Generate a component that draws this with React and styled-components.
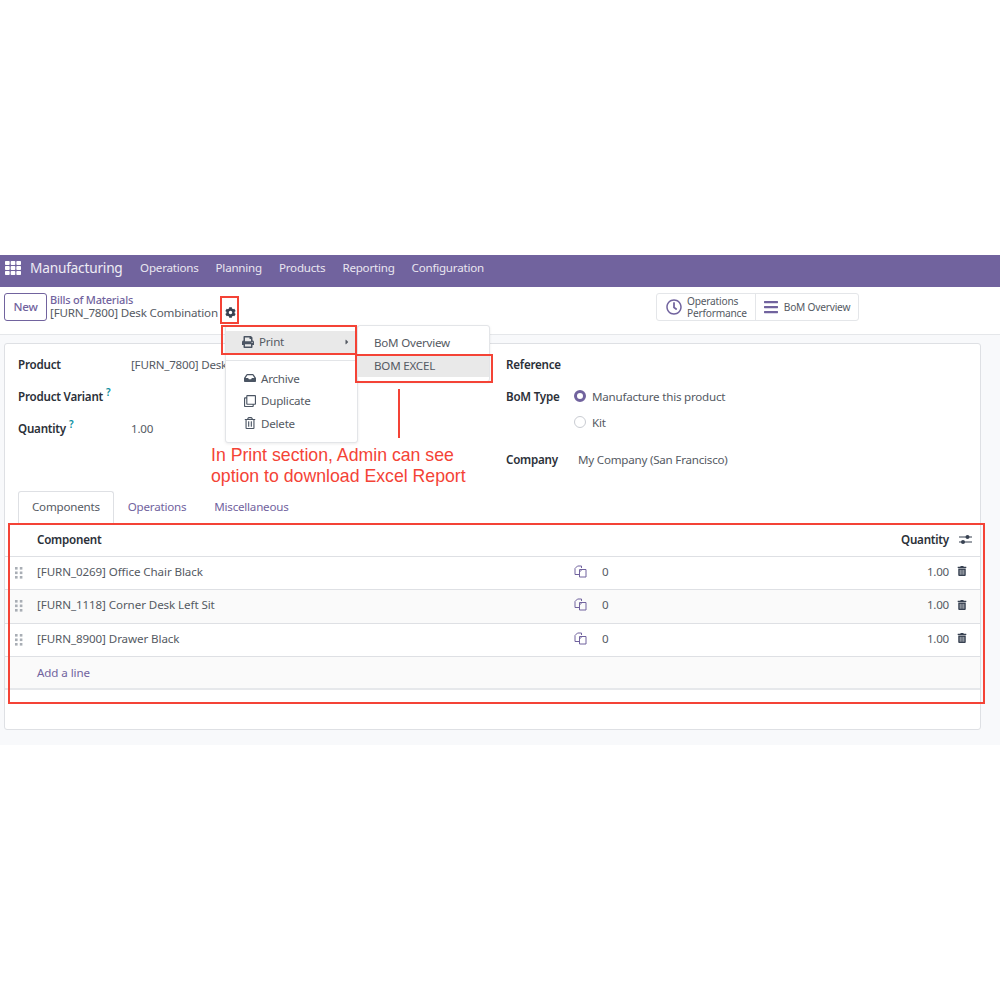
import React from "react";
import styled, { createGlobalStyle } from "styled-components";
import { FaCog, FaPrint, FaInbox, FaRegClone, FaRegTrashAlt, FaRegClock, FaBars, FaTrashAlt, FaCaretRight, FaTh } from "react-icons/fa";

const Global = createGlobalStyle`
  html, body { margin: 0; padding: 0; background: #fff; }
  body { font-family: "Noto Sans", "Open Sans", sans-serif; font-size: 11.6px; letter-spacing: -0.22px; color: #555a63; }
  * { box-sizing: border-box; }
`;
const Page = styled.div`position: relative; width: 1000px; height: 1000px; padding-top: 255px; overflow: hidden;`;
const Navbar = styled.nav`height: 32px; background: #71639e; color: #fff; display: flex; align-items: center; padding: 0 0 7px 5px;`;
const Apps = styled.span`display: flex; font-size: 16px; margin-right: 9px;`;
const Brand = styled.span`font-size: 13.7px; margin-right: 17.5px; color: #eeecf4;`;
const NavLink = styled.span`margin-right: 17px; color: #e9e6f0;`;
const ControlPanel = styled.div`height: 48px; display: flex; align-items: flex-start; padding: 6px 0 0 4px; background: #fff; border-bottom: 1px solid #e5e7ea;`;
const NewButton = styled.button`width: 43px; height: 28px; border: 1px solid #71639e; border-radius: 3px; background: #fff; color: #71639e; font: 500 11.6px "Noto Sans", sans-serif; letter-spacing: -0.22px; padding: 0 0 1px;`;
const Crumbs = styled.div`margin-left: 3px; width: 168px; display: flex; flex-direction: column; line-height: 13px; white-space: nowrap;`;
const CrumbLink = styled.span`color: #71639e; font-size: 11px; font-weight: 500;`;
const CrumbCurrent = styled.span`color: #555a63; letter-spacing: -0.18px;`;
const Gear = styled.span`display: flex; margin: 14px 0 0 7px; color: #374151; font-size: 11px;`;
const Stats = styled.div`display: flex; margin-left: 420px; height: 28px; border: 1px solid #e4e6e9; border-radius: 3px;`;
const Stat = styled.div`display: flex; align-items: center; gap: 5px; padding: 0 8px 0 ${p => p.$left}px; font-size: 10.2px; line-height: 12px; color: #555a63; & + & { border-left: 1px solid #e4e6e9; }`;
const StatIcon = styled.span`display: flex; color: #71639e; font-size: 16px;`;
const Content = styled.main`height: 410px; background: #f8f9fb; padding: 8px 19px 0 4px;`;
const Sheet = styled.section`height: 387px; background: #fff; border: 1px solid #dee0e4; border-radius: 3px; padding-top: 4px;`;
const FormGrid = styled.div`display: grid; grid-template-columns: 488px 1fr; padding-left: 13px; height: 143px;`;
const Col = styled.div`display: flex; flex-direction: column;`;
const Row = styled.div`height: ${p => p.$h || 32}px; display: flex; align-items: center;`;
const Label = styled.span`width: ${p => p.$w || 113}px; font-weight: 600; color: #2b3038; white-space: nowrap;`;
const Help = styled.sup`color: #0a8ea0; font-size: 10px; line-height: 0; margin-left: 3px; font-weight: 600;`;
const Value = styled.span`color: #555a63; white-space: nowrap;`;
const Radio = styled.span`width: 12px; height: 12px; border-radius: 50%; margin-right: 6px; background: #fff; border: ${p => p.$on ? "3.5px solid #71639e" : "1px solid #c9ccd2"};`;
const Tabs = styled.div`display: flex; height: 32px; margin-left: 13px; align-items: stretch;`;
const Tab = styled.div`display: flex; align-items: center; padding: 0 13px 2px; color: ${p => p.$on ? "#555a63" : "#71639e"}; background: #fff; border: 1px solid ${p => p.$on ? "#dee0e4" : "transparent"}; border-bottom: none; border-radius: 3px 3px 0 0;`;
const Table = styled.div`display: flex; flex-direction: column;`;
const TRow = styled.div`height: ${p => p.$h || 33.5}px; padding-bottom: ${p => p.$pb ?? 3}px; display: grid; grid-template-columns: 32px 537px 1fr 31px; align-items: center; background: ${p => p.$alt ? "#fafafa" : "#fff"}; border-bottom: ${p => p.$thick ? "2px solid #e6e8eb" : "1px solid #dee0e4"};`;
const Handle = styled.span`display: flex; padding: 3px 0 0 10px;`;
const Name = styled.span`white-space: nowrap; letter-spacing: ${p => p.$head ? "-0.22px" : "-0.09px"}; color: ${p => p.$link ? "#71639e" : p.$head ? "#2b3038" : "#555a63"}; font-weight: ${p => p.$head ? 600 : 400};`;
const Forecast = styled.span`display: flex; align-items: center; gap: 15px; width: 70px;`;
const Head = styled.span`font-weight: 600; color: #2b3038; text-align: right; white-space: nowrap;`;
const Qty = styled.div`display: flex; justify-content: space-between;`;
const Right = styled.span`text-align: right; flex: 1;`;
const Trash = styled.span`display: flex; padding-left: ${p => p.$pad || 8}px; color: #374151; font-size: 10px;`;
const Menu = styled.div`position: absolute; background: #fff; border: 1px solid #e3e5e8; border-radius: 3px; padding-top: 5px; box-shadow: 0 1px 3px rgba(0,0,0,.08);`;
const MainMenu = styled(Menu)`left: 225px; top: 325px; width: 133px; height: 118px;`;
const SubMenu = styled(Menu)`left: 357px; top: 325px; width: 133px; height: 57px;`;
const Item = styled.div`height: ${p => p.$h || 22.5}px; display: flex; align-items: center; padding: 0 0 1px ${p => p.$pad || 18}px; gap: 5px; background: ${p => p.$on ? "#e9e9e9" : "transparent"};`;
const ItemIcon = styled.span`display: flex; width: 12px; justify-content: center; font-size: 12px; color: #4b5563;`;
const Caret = styled.span`display: flex; margin-left: auto; margin-right: 6px; font-size: 8px;`;
const Divider = styled.div`height: 1px; background: #e3e5e8; margin: 6px 0 7px;`;
const RedBox = styled.div`position: absolute; border: 2px solid #f44336; left: ${p => p.$x}px; top: ${p => p.$y}px; width: ${p => p.$w}px; height: ${p => p.$h}px;`;
const RedLine = styled.div`position: absolute; left: 398px; top: 389px; width: 2px; height: 49px; background: #f44336;`;
const Note = styled.div`position: absolute; left: 211px; top: 445px; font: 17.7px/21px "Liberation Sans", sans-serif; letter-spacing: 0; color: #f44336; white-space: nowrap;`;

const Dots = () => (
  <svg width="8" height="12" viewBox="0 0 8 12" fill="#a9aeb5">
    {[0, 4.5, 9].map(y => [0, 4.8].map(x => <rect key={x + "-" + y} x={x} y={y} width="2.6" height="2.6" />))}
  </svg>
);
const CopyIcon = () => (
  <svg width="13" height="13" viewBox="0 0 13 13" fill="none" stroke="#71639e" strokeWidth="1">
    <path d="M5 9.5H1V3.5L3.5 1H7.5V3" /><path d="M5.5 4.5H12V12H5.5Z" /><path d="M5.5 7L8 4.5" />
  </svg>
);
const Sliders = () => (
  <svg width="13" height="11" viewBox="0 0 13 11" fill="#374151">
    <rect x="0" y="2.5" width="13" height="1" /><rect x="0" y="7.5" width="13" height="1" />
    <circle cx="8.5" cy="3" r="2" /><circle cx="4" cy="8" r="2" />
  </svg>
);
const rows = ["[FURN_0269] Office Chair Black", "[FURN_1118] Corner Desk Left Sit", "[FURN_8900] Drawer Black"];

export default function App() {
  return (
    <Page>
      <Global />
      <Navbar>
        <Apps><FaTh /></Apps>
        <Brand>Manufacturing</Brand>
        {["Operations", "Planning", "Products", "Reporting", "Configuration"].map(n => <NavLink key={n}>{n}</NavLink>)}
      </Navbar>
      <ControlPanel>
        <NewButton>New</NewButton>
        <Crumbs>
          <CrumbLink>Bills of Materials</CrumbLink>
          <CrumbCurrent>[FURN_7800] Desk Combination</CrumbCurrent>
        </Crumbs>
        <Gear><FaCog /></Gear>
        <Stats>
          <Stat $left={9}><StatIcon><FaRegClock /></StatIcon><span>Operations<br />Performance</span></Stat>
          <Stat $left={7}><StatIcon><FaBars /></StatIcon><span>BoM Overview</span></Stat>
        </Stats>
      </ControlPanel>
      <Content>
        <Sheet>
          <FormGrid>
            <Col>
              <Row><Label>Product</Label><Value>[FURN_7800] Desk Combination</Value></Row>
              <Row><Label>Product Variant<Help>?</Help></Label></Row>
              <Row $h={33}><Label>Quantity<Help>?</Help></Label><Value>1.00</Value></Row>
            </Col>
            <Col>
              <Row><Label $w={68}>Reference</Label></Row>
              <Row><Label $w={68}>BoM Type</Label><Radio $on /><Value>Manufacture this product</Value></Row>
              <Row $h={20}><Label $w={68} /><Radio /><Value>Kit</Value></Row>
              <Row $h={54}><Label $w={72}>Company</Label><Value>My Company (San Francisco)</Value></Row>
            </Col>
          </FormGrid>
          <Tabs>
            <Tab $on>Components</Tab>
            <Tab>Operations</Tab>
            <Tab>Miscellaneous</Tab>
          </Tabs>
          <Table>
            <TRow $pb={0}>
              <span /><Name $head>Component</Name>
              <Head>Quantity</Head>
              <Trash $pad={10}><Sliders /></Trash>
            </TRow>
            {rows.map((r, i) => (
              <TRow key={r} $alt={i === 1}>
                <Handle><Dots /></Handle>
                <Name>{r}</Name>
                <Qty>
                  <Forecast><CopyIcon /><span>0</span></Forecast>
                  <Right>1.00</Right>
                </Qty>
                <Trash><FaTrashAlt /></Trash>
              </TRow>
            ))}
            <TRow $alt $thick $h={33} $pb={1}><span /><Name $link>Add a line</Name></TRow>
          </Table>
        </Sheet>
      </Content>

      <MainMenu>
        <Item $on $pad={16}><ItemIcon><FaPrint /></ItemIcon>Print<Caret><FaCaretRight /></Caret></Item>
        <Divider />
        <Item><ItemIcon><FaInbox /></ItemIcon>Archive</Item>
        <Item><ItemIcon><FaRegClone /></ItemIcon>Duplicate</Item>
        <Item><ItemIcon><FaRegTrashAlt /></ItemIcon>Delete</Item>
      </MainMenu>
      <SubMenu>
        <Item $pad={16} $h={23}>BoM Overview</Item>
        <Item $pad={16} $on $h={23}>BOM EXCEL</Item>
      </SubMenu>

      <RedBox $x={220} $y={296} $w={19} $h={28} />
      <RedBox $x={221} $y={325} $w={136} $h={30} />
      <RedBox $x={355} $y={354} $w={138} $h={29} />
      <RedBox $x={8} $y={523} $w={977} $h={181} />
      <RedLine />
      <Note>In Print section, Admin can see<br />option to download Excel Report</Note>
    </Page>
  );
}
